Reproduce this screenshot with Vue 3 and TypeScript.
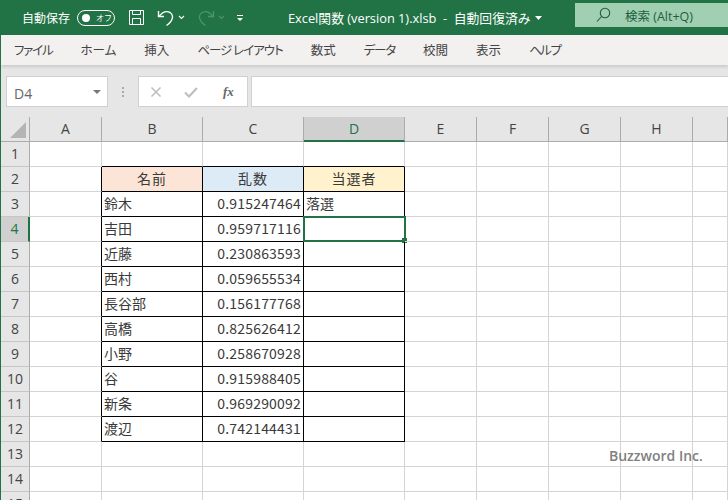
<script setup lang="ts">
const tabs: string[] = ['ファイル', 'ホーム', '挿入', 'ページ レイアウト', '数式', 'データ', '校閲', '表示', 'ヘルプ']
const cols: string[] = ['A', 'B', 'C', 'D', 'E', 'F', 'G', 'H', '']
const heads: string[] = ['名前', '乱数', '当選者']
const data: [string, string][] = [
  ['鈴木', '0.915247464'],
  ['吉田', '0.959717116'],
  ['近藤', '0.230863593'],
  ['西村', '0.059655534'],
  ['長谷部', '0.156177768'],
  ['高橋', '0.825626412'],
  ['小野', '0.258670928'],
  ['谷', '0.915988405'],
  ['新条', '0.969290092'],
  ['渡辺', '0.742144431'],
]
const rows: number[] = Array.from({ length: 15 }, (_, i) => i + 1)

function text(r: number, c: number): string {
  if (r === 2 && c >= 1 && c <= 3) return heads[c - 1]
  if (r >= 3 && r <= 12) {
    if (c === 1) return data[r - 3][0]
    if (c === 2) return data[r - 3][1]
    if (c === 3 && r === 3) return '落選'
  }
  return ''
}
function cls(r: number, c: number): Record<string, boolean> {
  const inT = r >= 2 && r <= 12 && c >= 1 && c <= 3
  return {
    bb: (r >= 1 && r <= 12 && c >= 1 && c <= 3),
    br: (r >= 2 && r <= 12 && c >= 0 && c <= 3),
    h1: r === 2 && c === 1,
    h2: r === 2 && c === 2,
    h3: r === 2 && c === 3,
    ctr: r === 2 && inT,
    num: r > 2 && c === 2 && inT,
  }
}
</script>

<template>
  <div class="app">
    <header class="title">
      <span class="auto">自動保存</span>
      <span class="toggle"><i class="knob"></i><b>オフ</b></span>
      <svg class="save" width="17" height="17" viewBox="0 0 17 17" fill="none" stroke="#fff" stroke-width="1">
        <path d="M1.5 1.5h14v14h-14z" /><path d="M4.5 1.5v4h8v-4M4.5 15.5v-6h8v6" />
      </svg>
      <svg class="undo" width="18" height="18" viewBox="0 0 18 18" fill="none" stroke="#fff" stroke-width="1.4">
        <path d="M1.5 2v5.5H7" /><path d="M2 7.5C5 3.5 9 1.5 13 3.5c4 2.5 3.5 8-3.5 13" />
      </svg>
      <svg class="chev" width="7" height="5" viewBox="0 0 7 5" fill="none" stroke="#fff" stroke-width="1.1"><path d="M1 1l2.5 2.5L6 1" /></svg>
      <svg class="redo" width="18" height="18" viewBox="0 0 18 18" fill="none" stroke="#4f9270" stroke-width="1.3">
        <path d="M16.5 2v5.5H11" /><path d="M16 7.5C13 3.5 9 1.5 5 3.5c-4 2.5-3.5 8 3.5 13" />
      </svg>
      <svg class="chev2" width="7" height="5" viewBox="0 0 7 5" fill="none" stroke="#4f9270" stroke-width="1.1"><path d="M1 1l2.5 2.5L6 1" /></svg>
      <svg class="cust" width="8" height="8" viewBox="0 0 8 8" fill="#fff"><path d="M1 1h6v1H1zM1 4h6L4 7z" /></svg>
      <span class="doc">Excel関数 (version 1).xlsb&nbsp; - &nbsp;自動回復済み</span>
      <svg class="caret" width="7" height="4" viewBox="0 0 7 4" fill="#fff"><path d="M0 0h7L3.500 4z" /></svg>
      <div class="search">
        <svg width="15" height="16" viewBox="0 0 15 16" fill="none" stroke="#1d5f3c" stroke-width="1.1">
          <circle cx="9" cy="6" r="4.7" /><path d="M5.500 9.500L1 14.500" />
        </svg>
        <span>検索 (Alt+Q)</span>
      </div>
    </header>

    <nav class="ribbon">
      <span v-for="t in tabs" :key="t">{{ t }}</span>
    </nav>

    <section class="fbar">
      <div class="namebox">
        <span class="nm">D4</span>
        <svg width="8" height="4" viewBox="0 0 8 4" fill="#777"><path d="M0 0h8L4 4z" /></svg>
      </div>
      <div class="dots"><i></i><i></i><i></i></div>
      <div class="fbtns">
        <svg width="12" height="12" viewBox="0 0 12 12" fill="none" stroke="#bdbdbd" stroke-width="1.500"><path d="M1.500 1.500l9 9M10.500 1.500l-9 9" /></svg>
        <svg width="14" height="12" viewBox="0 0 14 12" fill="none" stroke="#bdbdbd" stroke-width="2"><path d="M1 6.500l4 4L13 2" /></svg>
        <em>fx</em>
      </div>
      <div class="finput"></div>
    </section>

    <main class="sheet">
      <div class="corner"><svg width="16" height="16" viewBox="0 0 16 16" fill="#b4b4b4"><path d="M16 0v16H0z" /></svg></div>
      <div v-for="c in cols" :key="'h' + c" class="colh" :class="{ sel: c === 'D' }">{{ c }}</div>
      <template v-for="r in rows" :key="r">
        <div class="rowh" :class="{ sel: r === 4 }">{{ r }}</div>
        <div v-for="(c, i) in cols" :key="c + r" class="cell" :class="cls(r, i)">
          {{ text(r, i) }}
          <div v-if="r === 4 && i === 3" class="cursor"><i></i></div>
        </div>
      </template>
      <div class="mark">Buzzword Inc.</div>
    </main>
  </div>
</template>

<style>
html, body { margin: 0; overflow: hidden; background: #fff; }
</style>

<style scoped>
.app {
  width: 728px;
  height: 500px;
  overflow: hidden;
  font-family: "Noto Sans CJK JP", "Open Sans", sans-serif;
  display: flex;
  flex-direction: column;
  border-left: 1px solid #217346;
  box-sizing: border-box;
  color: #333;
}
.title {
  height: 35px;
  margin-left: -1px;
  flex: none;
  background: #217346;
  color: #fff;
  display: flex;
  align-items: center;
  font-size: 12px;
}
.auto { margin-left: 22px; width: 48px; white-space: nowrap; }
.toggle {
  margin-left: 7px;
  width: 38px;
  height: 16px;
  box-sizing: border-box;
  border: 1px solid #fff;
  border-radius: 8px;
  display: flex;
  align-items: center;
  padding-left: 4px;
  font-size: 8px;
}
.knob { width: 8px; height: 8px; border-radius: 50%; background: #fff; }
.toggle b { font-weight: 400; margin-left: 6px; white-space: nowrap; }
.save { margin-left: 13px; }
.undo { margin-left: 12px; }
.chev { margin-left: 3px; }
.redo { margin-left: 12px; }
.chev2 { margin-left: 3px; }
.cust { margin-left: 11px; }
.doc {
  margin-left: 44px;
  width: 245px;
  font-family: "Open Sans", "Noto Sans CJK JP", sans-serif;
  font-size: 12.800px;
  white-space: nowrap;
}
.caret { margin-left: 2px; }
.search {
  margin-left: 33px;
  flex: 1;
  height: 24px;
  margin-top: -5px;
  background: #a0cfb1;
  color: #1d5f3c;
  display: flex;
  align-items: center;
  padding-left: 21px;
  gap: 14px;
  font-size: 12.500px;
  font-family: "Open Sans", "Noto Sans CJK JP", sans-serif;
  white-space: nowrap;
}
.ribbon {
  height: 30px;
  flex: none;
  background: #f3f0f0;
  display: flex;
  align-items: center;
  gap: 28px;
  padding: 0 0 1px 13px;
  box-sizing: border-box;
  font-size: 12.500px;
  font-feature-settings: "palt";
  color: #444;
  white-space: nowrap;
  box-shadow: 0 2px 3px rgba(0, 0, 0, .12);
  position: relative;
}
.ribbon span:nth-child(1) { letter-spacing: -1.200px; }
.ribbon span:nth-child(4) { letter-spacing: -1px; }
.ribbon span:nth-child(6) { letter-spacing: -1.200px; }
.ribbon span:nth-child(9) { letter-spacing: -1.500px; }
.fbar {
  height: 52px;
  flex: none;
  background: #e6e6e6;
  display: flex;
  align-items: flex-start;
  padding: 11px 0 0 5px;
  box-sizing: border-box;
}
.namebox {
  width: 102px;
  height: 31px;
  box-sizing: border-box;
  background: #fff;
  border: 1px solid #d0d0d0;
  display: flex;
  align-items: center;
  justify-content: space-between;
  padding: 0 6px 0 7px;
  font-family: "Open Sans", sans-serif;
  font-size: 14px;
  color: #666;
}
.nm { margin-top: 4px; }
.dots { width: 30px; height: 31px; display: flex; flex-direction: column; align-items: center; justify-content: center; gap: 2px; }
.dots i { width: 2px; height: 2px; background: #aaa; }
.fbtns {
  width: 110px;
  height: 31px;
  box-sizing: border-box;
  background: #fff;
  border: 1px solid #d0d0d0;
  display: flex;
  align-items: center;
  gap: 22px;
  padding-left: 11px;
}
.fbtns em { font-family: "Liberation Serif", serif; font-weight: 700; font-size: 13px; color: #666; margin-left: 3px; }
.finput {
  flex: 1;
  margin-left: 3px;
  height: 31px;
  box-sizing: border-box;
  background: #fff;
  border: 1px solid #d0d0d0;
  border-right: 0;
}
.sheet {
  flex: 1;
  display: grid;
  grid-template-columns: 29px 72px 101px 101px 101px 72px 72px 72px 72px 1fr;
  grid-template-rows: 25px repeat(15, 25px);
  position: relative;
  background: #fff;
}
.corner {
  background: #e6e6e6;
  border-right: 1px solid #ababab;
  border-bottom: 1px solid #ababab;
  box-sizing: border-box;
  display: flex;
  align-items: flex-end;
  justify-content: flex-end;
  padding: 0 3px 3px 0;
}
.colh {
  background: #e6e6e6;
  border-right: 1px solid #ababab;
  border-bottom: 1px solid #ababab;
  box-sizing: border-box;
  text-align: center;
  line-height: 24px;
  font-size: 14px;
  font-family: "Open Sans", sans-serif;
  color: #444;
}
.colh.sel {
  background: #d0d0d0;
  color: #217346;
  border-bottom: 2px solid #217346;
}
.rowh {
  background: #e6e6e6;
  border-right: 1px solid #ababab;
  border-bottom: 1px solid #c6c6c6;
  box-sizing: border-box;
  text-align: center;
  line-height: 24px;
  font-size: 14px;
  font-family: "Open Sans", sans-serif;
  color: #444;
}
.rowh.sel {
  background: #d0d0d0;
  color: #217346;
  border-right: 2px solid #217346;
}
.cell {
  position: relative;
  box-sizing: border-box;
  border-right: 1px solid #d4d4d4;
  border-bottom: 1px solid #d4d4d4;
  font-size: 14px;
  line-height: 22px;
  padding: 0 2px;
  white-space: nowrap;
  overflow: visible;
  color: #3a3a3a;
}
.bb { border-bottom-color: #000; }
.br { border-right-color: #000; }
.h1 { background: #fce4d6; }
.h2 { background: #ddebf7; }
.h3 { background: #fff2cc; }
.ctr { text-align: center; letter-spacing: 1px; }
.num { text-align: right; font-family: "Noto Sans CJK JP", sans-serif; letter-spacing: .2px; }
.cursor {
  position: absolute;
  left: -1px;
  top: -1px;
  right: -2px;
  bottom: -1px;
  border: 2px solid #217346;
}
.cursor i {
  position: absolute;
  right: -3px;
  bottom: -3px;
  width: 5px;
  height: 5px;
  background: #217346;
  border: 0;
}
.mark {
  position: absolute;
  left: 608px;
  top: 329px;
  font-family: "Open Sans", sans-serif;
  font-weight: 600;
  font-size: 14px;
  color: #808080;
  white-space: nowrap;
}
</style>
